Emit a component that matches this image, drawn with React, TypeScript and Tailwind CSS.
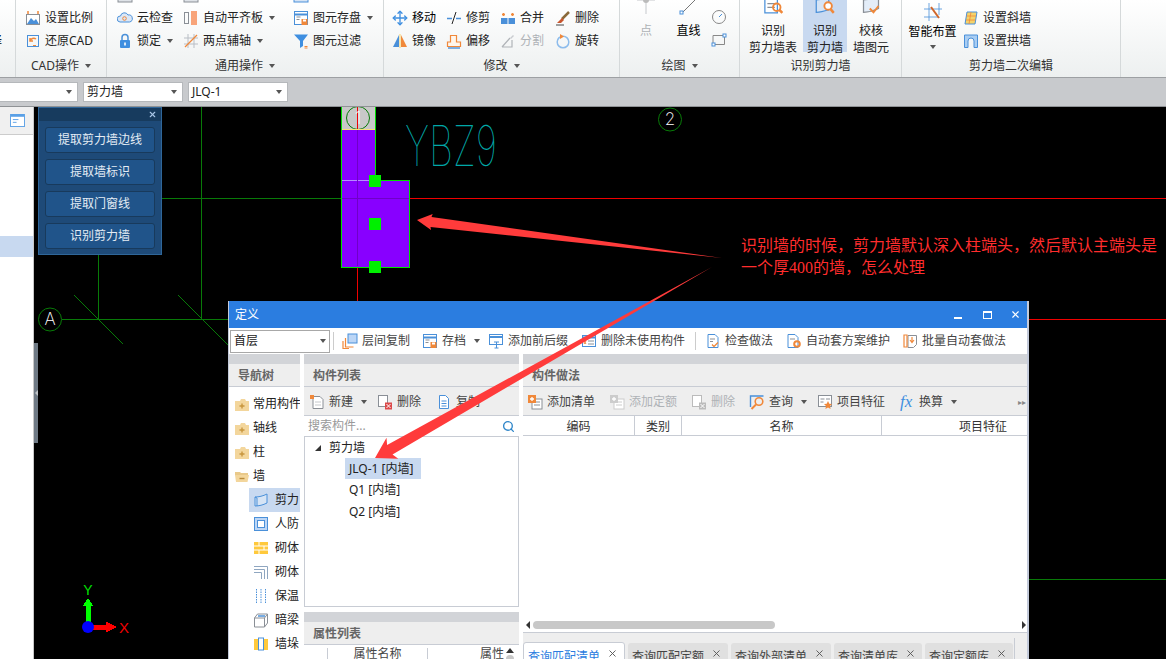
import type { ReactNode } from "react";
import { Move, Search, X } from "lucide-react";

const B = "#4a90d9";
const O = "#f0883a";
const G = "#8a8f96";

function Ico({ children, className = "w-4 h-4" }: { children: ReactNode; className?: string }) {
  return (
    <svg viewBox="0 0 16 16" fill="none" className={`shrink-0 ${className}`}>
      {children}
    </svg>
  );
}

function Caret({ className = "" }: { className?: string }) {
  return <span className={`inline-block w-0 h-0 border-x-[3.5px] border-x-transparent border-t-[4px] border-t-[#555] ${className}`} />;
}

const icons = {
  scale: <><rect x="1.500" y="4.500" width="13" height="10" stroke={G} fill="#fff" /><path d="M2 14l4-6 3 3 2-2 3 5z" fill={B} /><path d="M3 1v3M13 1v3" stroke={O} strokeWidth="1.500" /></>,
  restore: <><rect x="2.500" y="2.500" width="11" height="11" stroke={B} /><path d="M11 6a4 4 0 0 0-6 2M5 5v3h3" stroke={O} strokeWidth="1.500" /><path d="M8 12.500h3" stroke={O} /></>,
  cloud: <><path d="M3 12a3 3 0 0 1 .5-6A4 4 0 0 1 11 5a3.500 3.500 0 0 1 1.500 7z" fill="#dbe7f6" stroke={B} /><circle cx="7.500" cy="8.500" r="1.800" stroke={O} /></>,
  lock: <><path d="M5 7V4.500a3 3 0 0 1 6 0V7" stroke={B} strokeWidth="1.500" /><rect x="3" y="7" width="10" height="8" rx="1" fill="#3f8fe0" /><rect x="7.200" y="9.500" width="1.600" height="3" fill="#fff" /></>,
  align: <><rect x="1.500" y="2.500" width="4" height="11" stroke={G} /><rect x="8" y="1" width="6" height="14" fill="#f8a47a" /></>,
  twoPoint: <><path d="M1 5h14M1 11h14M5 1v14M11 1v14" stroke="#b9bec5" /><path d="M2 14L14 2" stroke={O} strokeWidth="1.300" /></>,
  saveWin: <><rect x="1.500" y="1.500" width="13" height="13" fill="#fff" stroke={B} /><path d="M2 4.500h12" stroke={B} strokeWidth="2" /><path d="M3.500 7h4M3.500 9.500h3" stroke={G} /><rect x="8.500" y="9" width="6" height="6" fill={O} /><rect x="10" y="9.500" width="3" height="2" fill="#fff" /></>,
  filter: <><path d="M1 1.500h14L10 8v5L7 15V8z" fill="#3f8fe0" /><path d="M11.500 13.500h3M11.500 15h3" stroke={O} /></>,
  trim: <><path d="M1 8.500h5M10 8.500h5" stroke={B} strokeWidth="1.300" /><path d="M6 14L10 2" stroke="#222" /></>,
  merge: <><rect x="1" y="8" width="6.500" height="6" fill={B} /><rect x="8.500" y="8" width="6.500" height="6" fill={B} /><path d="M2 4.500h3M3.500 3v3M11 4.500h3M12.500 3v3" stroke={O} strokeWidth="1.500" /></>,
  erase: <><path d="M14 2L7 9" stroke="#8a6a3a" strokeWidth="2.500" /><path d="M7 8l2 2-3 3H2z" fill="#c8562e" /><path d="M1 15h8" stroke="#444" /></>,
  mirror: <><path d="M7 2v12H1z" fill={B} /><path d="M9 2v12h6z" fill={O} /><path d="M8 1v14" stroke="#f5d36a" /></>,
  offset: <><path d="M1.500 13.500V9h3V2.500h6V9h4v4.500z" stroke={O} fill="#fff6ec" strokeWidth="1.200" /><path d="M2 15h12" stroke={B} strokeWidth="1.400" /></>,
  split: <><path d="M2 14h10V7M2 14l8-9" stroke="#b0b4b8" strokeWidth="1.200" /><path d="M10 5l3-3 1 1-3 3z" fill="#c9ccd0" /></>,
  rotate: <><circle cx="8" cy="9" r="5.800" stroke="#8dbcec" strokeWidth="1.500" /><path d="M5 1l4 2.500L5 6z" fill={O} /></>,
  wall: <><path d="M2 5c4 0 8-1 12-3v9c-4 2-8 3-12 3z" fill="#d6e4f5" stroke={B} /><path d="M2 5l2 1v8" stroke={B} /></>,
  wallCheck: <><path d="M2 3c4 0 8-1 12-2v9c-4 2-8 3-12 3z" fill="#e4edf8" stroke={G} /><path d="M7 10l3 3 4-5" stroke={O} strokeWidth="1.500" /></>,
  wallFind: <><path d="M1 3c3 0 7-1 10-2v10c-3 1-7 2-10 2z" fill="#d6e4f5" stroke={B} /><circle cx="10.500" cy="8" r="3" fill="#fff" stroke={O} strokeWidth="1.500" /><path d="M12.500 10.500l2.500 3" stroke={O} strokeWidth="2" /></>,
  wallTable: <><rect x="1.500" y="2.500" width="10" height="11" stroke={B} fill="#fff" /><path d="M3.500 6h6M3.500 9h6" stroke={G} /><circle cx="11" cy="9" r="3" stroke={O} strokeWidth="1.500" /><path d="M13 11l2.500 2.500" stroke={O} strokeWidth="2" /></>,
  slant: <><path d="M4 2h10l-2 12H2z" fill="#f5d36a" stroke={B} /><path d="M3.500 6h9.500M3 10h9.500M8 2L6 14" stroke={O} strokeWidth=".8" /></>,
  arch: <><path d="M1.500 14.500V2h13v12.500h-3.500V8a3 3 0 0 0-6 0v6.500z" fill="#a9cdf2" stroke={B} /></>,
  copyFloors: <><rect x="6" y="1" width="9" height="9" fill="#bcd6f6" stroke={B} /><path d="M3.500 5v9h8M1 8v7.500h6" stroke={O} strokeWidth="1.200" /></>,
  addFix: <><rect x="1.500" y="1.500" width="13" height="10" fill="#fff" stroke={B} /><path d="M2 4h12" stroke={B} strokeWidth="2" /><path d="M6 9h5M8.500 9v6M6.500 15h4" stroke={B} /></>,
  removeUnused: <><rect x="1.500" y="2.500" width="13" height="11" fill="#fff" stroke={B} /><path d="M2 4.500h12" stroke={B} strokeWidth="2" /><path d="M7 8h6M7 11h6" stroke={G} /><path d="M3 8l2 3M5 8l-2 3" stroke={O} /></>,
  doc: <><path d="M3 1.500h7l3 3v10H3z" fill="#fff" stroke={B} /><path d="M5 6h5M5 8.500h3" stroke={G} /><path d="M7 11.500l2 2 4-4" stroke={O} strokeWidth="1.300" /></>,
  docGear: <><path d="M2 1.500h7l3 3v10H2z" fill="#fff" stroke={B} /><path d="M4 6h5" stroke={G} /><circle cx="11" cy="11" r="2.800" stroke={O} strokeWidth="2" /></>,
  batch: <><path d="M6 2.500h8.500v9l-3 3H6z" fill="#fff" stroke={G} /><path d="M2 2v12h3V2z" stroke={O} strokeWidth="1.200" /><path d="M10 4v5M8 7l2 2.500L12 7" stroke={O} strokeWidth="1.200" /></>,
  newDoc: <><path d="M4 2.500h7l3 3v9H4z" fill="#fff" stroke={G} /><rect x="1" y="1" width="4" height="4" fill={O} /><path d="M6 8h6M6 11h6" stroke="#c5c8cc" /></>,
  del: <><rect x="1.500" y="1.500" width="9" height="11" fill="#fff" stroke={G} /><rect x="8" y="8.500" width="7" height="7" fill="#dc4a4a" /><path d="M9.500 10l4 4M13.500 10l-4 4" stroke="#fff" /></>,
  delOff: <><rect x="1.500" y="1.500" width="9" height="11" fill="#fff" stroke="#bbb" /><rect x="8" y="8.500" width="7" height="7" fill="#bbb" /><path d="M9.500 10l4 4M13.500 10l-4 4" stroke="#fff" /></>,
  copy: <><path d="M3.500 1.500h6l3 3v10h-9z" fill="#fff" stroke={B} /><path d="M5.500 7h5M5.500 9.500h5M5.500 12h5" stroke={B} /></>,
  addList: <><rect x="5" y="5" width="10" height="10" fill="#fff" stroke={G} /><path d="M7 8h6M7 11h6" stroke={G} /><rect x="1" y="1" width="8" height="8" fill={O} /><path d="M3 5h4M5 3v4" stroke="#fff" strokeWidth="1.300" /></>,
  addOff: <><rect x="5" y="5" width="10" height="10" fill="#fff" stroke="#ccc" /><path d="M7 8h6M7 11h6" stroke="#ccc" /><rect x="1" y="1" width="8" height="8" fill="#ccc" /><path d="M3 5h4M5 3v4" stroke="#fff" strokeWidth="1.300" /></>,
  query: <><path d="M1.500 13V2h13" stroke={B} strokeWidth="1.400" /><circle cx="10" cy="7.500" r="3.800" stroke={O} strokeWidth="1.600" /><path d="M7 10.500L2.500 15" stroke={O} strokeWidth="2" /></>,
  feature: <><rect x="1.500" y="1.500" width="13" height="11" fill="#fff" stroke={G} /><path d="M3.500 5h4M3.500 8h3M9 5h4" stroke={G} /><path d="M11 7l1.300 2.700 2.700.3-2 2 .6 3-2.600-1.500L8.400 15l.6-3-2-2 2.700-.3z" fill={O} /></>,
  folderPlus: <><path d="M1 5h5l1-2h4l1 2h3v10H1z" fill="#f3d69c" /><path d="M5.500 10h5M8 7.500v5" stroke="#c8963e" strokeWidth="1.400" /></>,
  folderOpen: <><path d="M1 4h5l1 1h7v2H1z" fill="#e9c98a" /><path d="M1 7h14l-1.500 7H2z" fill="#f3d69c" /><path d="M5.500 10.500h5" stroke="#b88a3a" strokeWidth="1.400" /></>,
  defence: <><rect x="1.500" y="1.500" width="13" height="13" fill="#bcd6f6" stroke={B} /><rect x="4.500" y="4.500" width="7" height="7" fill="#fff" stroke={B} /></>,
  brick: <><rect x="1" y="2" width="14" height="12" fill="#ffc93c" /><path d="M1 6h14M1 10h14M6 2v4M11 6v4M6 10v4" stroke="#fff" /></>,
  brickLine: <><path d="M1 2.500h13.500V15M1 5.500h10.500V15M1 8.500h7.500V15" stroke="#8fa6c0" /></>,
  insulate: <><path d="M3.500 1v14M8 1v14M12.500 1v14" stroke={B} strokeDasharray="1.500 1" /></>,
  beam: <><path d="M1.500 6l3-4h10v9l-3 4h-10z" fill="#fff" stroke={G} /><path d="M1.500 6h10v9M11.500 6l3-4" stroke={G} /><path d="M5 4h7" stroke={B} strokeWidth="1.500" /></>,
  pier: <><rect x="1" y="3" width="14" height="11" fill="#ffc93c" /><rect x="5.500" y="2" width="5" height="12" fill="#fff" stroke={B} /></>,
  stub: <><rect x="1" y="0" width="14" height="15" fill="#dfe3e8" stroke={G} /></>,
  stubBlue: <><rect x="1" y="0" width="14" height="15" fill="#d6e4f5" stroke={B} /></>,
};

function Tool({ icon, label, caret, off, className = "" }: { icon: ReactNode; label: string; caret?: boolean; off?: boolean; className?: string }) {
  return (
    <div className={`flex items-center h-[23px] shrink-0 ${className}`}>
      <Ico>{icon}</Ico>
      <span className={`ml-1 whitespace-nowrap ${off ? "text-[#aeb2b6]" : "text-[#222]"}`}>{label}</span>
      {caret && <Caret className="ml-[6px]" />}
    </div>
  );
}

function Stub({ icon }: { icon: ReactNode }) {
  return (
    <div className="h-[23px] flex items-center shrink-0">
      <Ico>{icon}</Ico>
    </div>
  );
}

function Group({ label, caret, className, children }: { label: string; caret?: boolean; className: string; children: ReactNode }) {
  return (
    <div className={`h-full shrink-0 flex flex-col border-r border-[#d5d9da] ${className}`}>
      <div className="h-[52px] flex">{children}</div>
      <div className="h-[25px] flex items-center justify-center text-[#333] pt-[2px]">
        {label}
        {caret && <Caret className="ml-[6px]" />}
      </div>
    </div>
  );
}

function Column({ className = "", children }: { className?: string; children: ReactNode }) {
  return <div className={`flex flex-col justify-end shrink-0 h-[52px] ${className}`}>{children}</div>;
}

function BigTool({ lines, icon, active, className = "" }: { lines: string[]; icon: ReactNode; active?: boolean; className?: string }) {
  return (
    <div className={`flex flex-col items-center shrink-0 h-[52px] leading-[17px] text-[#222] ${active ? "bg-[#c8d9f0]" : ""} ${className}`}>
      <Ico className="w-5 h-5 -mt-[4px] mb-[6px]">{icon}</Ico>
      {lines.map((l) => (
        <span key={l} className="whitespace-nowrap">{l}</span>
      ))}
    </div>
  );
}

function Ribbon() {
  return (
    <div className="h-[77px] flex bg-gradient-to-b from-white to-[#edf0f0] text-[12px] border-b border-[#9da0a3] box-content overflow-hidden">
      <Group label="" className="w-[16px]">
        <Column className="w-full overflow-hidden">
          <div className="h-[23px] -ml-[10px] flex items-center">择</div>
        </Column>
      </Group>
      <Group label="CAD操作" caret className="w-[91px]">
        <Column className="pl-[9px]">
          <Tool icon={icons.scale} label="设置比例" />
          <Tool icon={icons.restore} label="还原CAD" />
        </Column>
      </Group>
      <Group label="通用操作" caret className="w-[277px]">
        <Column className="w-[76px] pl-[10px]">
          <Stub icon={icons.stub} />
          <Tool icon={icons.cloud} label="云检查" />
          <Tool icon={icons.lock} label="锁定" caret />
        </Column>
        <Column className="w-[110px]">
          <Stub icon={icons.stub} />
          <Tool icon={icons.align} label="自动平齐板" caret />
          <Tool icon={icons.twoPoint} label="两点辅轴" caret />
        </Column>
        <Column>
          <Stub icon={icons.stubBlue} />
          <Tool icon={icons.saveWin} label="图元存盘" caret />
          <Tool icon={icons.filter} label="图元过滤" />
        </Column>
      </Group>
      <Group label="修改" caret className="w-[236px]">
        <div className="grid grid-cols-[54px_54px_55px_55px] pl-[8px] self-end">
          <div className="flex items-center h-[23px]">
            <Move className="w-4 h-4 text-[#3f8fe0]" />
            <span className="ml-1">移动</span>
          </div>
          <Tool icon={icons.trim} label="修剪" />
          <Tool icon={icons.merge} label="合并" />
          <Tool icon={icons.erase} label="删除" />
          <Tool icon={icons.mirror} label="镜像" />
          <Tool icon={icons.offset} label="偏移" />
          <Tool icon={icons.split} label="分割" off />
          <Tool icon={icons.rotate} label="旋转" />
        </div>
      </Group>
      <Group label="绘图" caret className="w-[120px]">
        <div className="w-[52px] flex flex-col items-center h-[52px] text-[#aeb2b6] leading-[17px]">
          <svg viewBox="0 0 20 20" className="w-5 h-5 -mt-[4px] mb-[6px] shrink-0">
            <path d="M1 4h18M10 0v18" stroke="#c5c8cc" />
            <circle cx="10" cy="4" r="3" fill="#bbb" />
          </svg>
          点
        </div>
        <div className="w-[33px] flex flex-col items-center h-[52px] leading-[17px]">
          <svg viewBox="0 0 20 20" className="w-5 h-5 -mt-[4px] mb-[6px] shrink-0">
            <path d="M3 17L19 1" stroke="#777" />
            <rect x="1" y="15" width="3" height="3" stroke={B} fill="#fff" />
          </svg>
          直线
        </div>
        <Column className="pl-[6px]">
          <Ico><circle cx="8" cy="8" r="6.500" stroke="#888" /><path d="M8 8l3-3" stroke={B} /></Ico>
          <div className="h-[7px]" />
          <Ico className="w-4 h-4 mb-[4px]"><path d="M2 3.500h11.500v9H2z" stroke="#888" /><rect x="12" y="2" width="3" height="3" stroke={B} fill="#fff" /><rect x="1" y="11" width="3" height="3" stroke={B} fill="#fff" /></Ico>
        </Column>
      </Group>
      <Group label="识别剪力墙" className="w-[162px]">
        <BigTool lines={["识别", "剪力墙表"]} icon={icons.wallTable} className="w-[63px] pl-[3px]" />
        <BigTool lines={["识别", "剪力墙"]} icon={icons.wallFind} active className="w-[44px]" />
        <BigTool lines={["校核", "墙图元"]} icon={icons.wallCheck} className="w-[48px]" />
      </Group>
      <Group label="剪力墙二次编辑" className="w-[219px]">
        <div className="w-[61px] flex flex-col items-center justify-end h-[52px]">
          <svg viewBox="0 0 24 20" className="w-6 h-5 shrink-0">
            <path d="M3 6h18M3 14h14M8 0v18M18 0v12" stroke={B} strokeWidth=".8" />
            <path d="M10 4l8 11" stroke="#d0662a" strokeWidth="2" />
          </svg>
          <span className="leading-[18px]">智能布置</span>
          <Caret className="mb-[3px] mt-[4px]" />
        </div>
        <Column>
          <Tool icon={icons.slant} label="设置斜墙" />
          <Tool icon={icons.arch} label="设置拱墙" />
        </Column>
      </Group>
    </div>
  );
}

function Select({ value, className }: { value: string; className: string }) {
  return (
    <div className={`h-[20px] bg-white border border-[#b5b8bb] flex items-center justify-between px-[3px] text-[12px] text-[#222] ${className}`}>
      <span>{value}</span>
      <Caret className="mr-[2px]" />
    </div>
  );
}

function CadDrawing() {
  return (
    <svg viewBox="38 107 1128 552" className="absolute inset-0 w-[1128px] h-[552px]" shapeRendering="crispEdges">
      <rect x="341" y="107" width="35" height="22" fill="#c8c8c8" />
      <path d="M357.500 107V129" stroke="#f00000" />
      <g stroke="#087a08" fill="none">
        <path d="M201.500 107V320M98.500 255V320M162 198.500H341M62 319.500H228M1029 579.500H1166" />
        <path d="M74 295L123 344M178 295L228 345" shapeRendering="auto" />
        <g shapeRendering="auto">
          <circle cx="358" cy="118" r="11.500" />
          <circle cx="670" cy="119.500" r="11.500" />
          <circle cx="50" cy="319.500" r="11.500" />
        </g>
      </g>
      <path d="M410 198.500H1166M357.500 267V301M1029 319.500H1166" stroke="#f00000" />
      <path d="M341.500 129.500H375.500V180.500H409.500V267.500H341.500Z" fill="#8800ff" stroke="#00e000" />
      <path d="M341.500 107V129M375.500 107V129" stroke="#00e000" />
      <path d="M342 129.500H375" stroke="#f5e27a" />
      <path d="M342 180.500H375" stroke="#b58cff" />
      <path d="M342 198.500H409M357.500 130V266" stroke="#7000c8" />
      <rect x="369" y="175" width="12" height="12" fill="#00f000" />
      <rect x="369" y="218" width="12" height="12" fill="#00f000" />
      <rect x="369" y="261" width="12" height="12" fill="#00f000" />
      <g shapeRendering="auto" fontFamily="Inter, sans-serif" fontWeight="200" textAnchor="middle" fill="#fff" fontSize="17">
        <text x="358" y="124">1</text>
        <text x="670" y="125">2</text>
        <text x="50" y="325">A</text>
      </g>
      <text x="405" y="166" fontSize="56" fontFamily="Inter, sans-serif" fontWeight="100" fill="#00a8a8" textLength="92" lengthAdjust="spacingAndGlyphs" shapeRendering="auto">YBZ9</text>

      <path d="M85.500 622V606H82.500L88 598L93.500 606H90.500V622Z" fill="#00ff00" />
      <path d="M92 624.500H106V621.500L117 627L106 632.500V629.500H92Z" fill="#ff0000" />
      <circle cx="88" cy="627" r="6" fill="#0000ff" shapeRendering="auto" />
      <text x="88" y="595" fontSize="14" fill="#00e000" textAnchor="middle" fontFamily="'Liberation Sans', sans-serif">Y</text>
      <text x="124" y="633" fontSize="15" fill="#f00000" textAnchor="middle" fontFamily="'Liberation Sans', sans-serif">X</text>
    </svg>
  );
}

function PickPanel() {
  const items = ["提取剪力墙边线", "提取墙标识", "提取门窗线", "识别剪力墙"];
  return (
    <div className="absolute left-0 top-0 w-[124px] h-[148px] bg-[#1e4a78] border border-[#2f6699] text-[12px] text-[#e4ecf4]">
      <div className="h-[13px] bg-[#173b5e] flex items-center justify-end pr-[4px]">
        <X className="w-[9px] h-[9px] text-[#a9c6e6]" strokeWidth={3} />
      </div>
      <div className="flex flex-col gap-[6px] px-[6px] pt-[6px]">
        {items.map((t) => (
          <div key={t} className="h-[26px] rounded-[3px] bg-[#20548a] border border-[#183a5c] flex items-center justify-center">
            {t}
          </div>
        ))}
      </div>
    </div>
  );
}

function WinTool({ icon, label, caret, className = "" }: { icon: ReactNode; label: string; caret?: boolean; className?: string }) {
  return (
    <div className={`h-[24px] flex items-center shrink-0 text-[#444] ${className}`}>
      <Ico>{icon}</Ico>
      <span className="ml-[4px] whitespace-nowrap">{label}</span>
      {caret && <Caret className="ml-[8px]" />}
    </div>
  );
}

function PanelHead({ title }: { title: string }) {
  return (
    <>
      <div className="h-[10px] bg-[#d2d4d8] shrink-0" />
      <div className="h-[23px] bg-[#eeeeee] border-b border-[#c8ccd4] flex items-center pl-[9px] pt-[1px] font-bold text-[#666] shrink-0">{title}</div>
    </>
  );
}

function NavRow({ icon, label, sub, active }: { icon: ReactNode; label: string; sub?: boolean; active?: boolean }) {
  return (
    <div className={`h-[24px] flex items-center whitespace-nowrap overflow-hidden ${sub ? "ml-[20px] pl-[4px]" : "pl-[5px]"} ${active ? "bg-[#c8d9f0]" : ""}`}>
      <Ico>{icon}</Ico>
      <span className={sub ? "ml-[6px]" : "ml-[3px]"}>{label}</span>
    </div>
  );
}

function DefineWindow() {
  const tabs = [
    { t: "查询匹配定额", w: "w-[100px]" },
    { t: "查询外部清单", w: "w-[100px]" },
    { t: "查询清单库", w: "w-[88px]" },
    { t: "查询定额库", w: "w-[88px]" },
  ];
  return (
    <div className="absolute left-[228px] top-[301px] w-[801px] h-[358px] bg-white flex flex-col overflow-hidden text-[12px] text-[#222] border-l border-r-2 border-[#c3cada]">
      <div className="h-[27px] bg-[#2b7de0] -ml-[1px] -mr-[2px] flex items-center justify-between text-white shrink-0 pl-[7px]">
        <span>定义</span>
        <div className="flex items-center">
          <span className="w-[8px] h-[2px] bg-white mt-[6px] mr-[21px]" />
          <span className="w-[9px] h-[8px] border border-white border-t-2 mr-[18px]" />
          <X className="w-[11px] h-[11px] mr-[8px]" strokeWidth={2.5} />
        </div>
      </div>
      <div className="h-[26px] flex items-center shrink-0 pl-[1px]">
        <div className="w-[100px] h-[23px] border border-[#a8a8a8] flex items-center justify-between px-[3px] text-[#222] shrink-0">
          <span>首层</span>
          <Caret />
        </div>
        <span className="w-px h-[18px] bg-[#ccc] ml-[3px] mr-[8px]" />
        <WinTool icon={icons.copyFloors} label="层间复制" className="w-[80px]" />
        <WinTool icon={icons.saveWin} label="存档" caret className="w-[66px]" />
        <WinTool icon={icons.addFix} label="添加前后缀" className="w-[93px]" />
        <WinTool icon={icons.removeUnused} label="删除未使用构件" className="w-[114px]" />
        <span className="w-px h-[18px] bg-[#ccc] mr-[9px]" />
        <WinTool icon={icons.doc} label="检查做法" className="w-[81px]" />
        <WinTool icon={icons.docGear} label="自动套方案维护" className="w-[116px]" />
        <WinTool icon={icons.batch} label="批量自动套做法" />
      </div>
      <div className="flex-1 flex gap-[4px] min-h-0">
        <div className="w-[71px] flex flex-col shrink-0 overflow-hidden">
          <PanelHead title="导航树" />
          <div className="pt-[5px] flex flex-col">
            <NavRow icon={icons.folderPlus} label="常用构件" />
            <NavRow icon={icons.folderPlus} label="轴线" />
            <NavRow icon={icons.folderPlus} label="柱" />
            <NavRow icon={icons.folderOpen} label="墙" />
            <NavRow icon={icons.wall} label="剪力" sub active />
            <NavRow icon={icons.defence} label="人防" sub />
            <NavRow icon={icons.brick} label="砌体" sub />
            <NavRow icon={icons.brickLine} label="砌体" sub />
            <NavRow icon={icons.insulate} label="保温" sub />
            <NavRow icon={icons.beam} label="暗梁" sub />
            <NavRow icon={icons.pier} label="墙垛" sub />
          </div>
        </div>

        <div className="w-[215px] flex flex-col shrink-0">
          <PanelHead title="构件列表" />
          <div className="h-[29px] bg-[#eeeeee] border-b border-[#c8ccd4] flex items-center pl-[5px] pt-[1px] shrink-0">
            <WinTool icon={icons.newDoc} label="新建" caret className="w-[68px]" />
            <WinTool icon={icons.del} label="删除" className="w-[59px]" />
            <WinTool icon={icons.copy} label="复制" />
          </div>
          <div className="h-[20px] flex items-center justify-between px-[4px] text-[#999] shrink-0">
            <span>搜索构件...</span>
            <Search className="w-[13px] h-[13px] text-[#2f86c9]" strokeWidth={2.5} />
          </div>
          <div className="h-[171px] border border-[#c8ccd4] shrink-0">
            <div className="h-[21px] flex items-center pl-[10px]">
              <span className="w-0 h-0 border-l-[6px] border-l-transparent border-b-[6px] border-b-[#333]" />
              <span className="ml-[8px]">剪力墙</span>
            </div>
            <div className="ml-[40px] w-[76px] h-[21px] bg-[#c8d9f0] flex items-center pl-[4px] whitespace-nowrap">JLQ-1 [内墙]</div>
            <div className="ml-[44px] h-[22px] flex items-center">Q1 [内墙]</div>
            <div className="ml-[44px] h-[21px] flex items-center">Q2 [内墙]</div>
          </div>
          <div className="h-[5px] shrink-0" />
          <PanelHead title="属性列表" />
          <div className="flex-1 flex items-center text-[#444] relative pt-[3px] overflow-hidden">
            <span className="w-[24px] h-full border-r border-[#c8ccd4]" />
            <span className="w-[100px] h-full border-r border-[#c8ccd4] flex items-center justify-center">属性名称</span>
            <span className="ml-[52px]">属性</span>
            <span className="absolute right-[5px] top-[3px] w-0 h-0 border-x-[4px] border-x-transparent border-b-[5px] border-b-[#333]" />
            <span className="absolute right-[5px] top-[10px] w-[8px] h-[8px] rounded-full bg-[#c8c8c8]" />
          </div>
        </div>

        <div className="flex-1 flex flex-col min-w-0">
          <PanelHead title="构件做法" />
          <div className="h-[29px] bg-[#eeeeee] border-b border-[#c8ccd4] flex items-center pl-[4px] pt-[1px] shrink-0 relative">
            <WinTool icon={icons.addList} label="添加清单" className="w-[82px]" />
            <WinTool icon={icons.addOff} label="添加定额" className="w-[82px] !text-[#aeb2b6]" />
            <WinTool icon={icons.delOff} label="删除" className="w-[58px] !text-[#aeb2b6]" />
            <WinTool icon={icons.query} label="查询" caret className="w-[68px]" />
            <WinTool icon={icons.feature} label="项目特征" className="w-[83px]" />
            <div className="flex items-center text-[#444]">
              <span className="w-[14px] italic font-['Liberation_Serif',serif] text-[17px] text-[#3f8fe0]">fx</span>
              <span className="ml-[5px]">换算</span>
              <Caret className="ml-[8px]" />
            </div>
            <span className="absolute right-[1px] text-[#888] text-[8px]">▸▸</span>
          </div>
          <div className="h-[20px] flex text-[#333] border-b border-[#c8ccd4] shrink-0 overflow-hidden">
            <div className="w-[112px] shrink-0 border-r border-[#c8ccd4] flex items-center justify-center pt-[2px]">编码</div>
            <div className="w-[47px] shrink-0 border-r border-[#c8ccd4] flex items-center justify-center pt-[2px]">类别</div>
            <div className="w-[200px] shrink-0 border-r border-[#c8ccd4] flex items-center justify-center pt-[2px]">名称</div>
            <div className="w-[202px] shrink-0 flex items-center justify-center pt-[2px]">项目特征</div>
          </div>
          <div className="flex-1" />
          <div className="h-[12px] border-b border-[#c8ccd4] flex items-center shrink-0 box-content pb-[1px] relative">
            <span className="ml-[3px] w-0 h-0 border-y-[4px] border-y-transparent border-r-[4px] border-r-[#333]" />
            <span className="ml-[3px] w-[242px] h-[8px] rounded-full bg-[#c8c8c8]" />
            <span className="absolute right-[1px] w-0 h-0 border-y-[4px] border-y-transparent border-l-[4px] border-l-[#333]" />
          </div>
          <div className="h-[26px] bg-[#eeeeee] flex items-start pt-[9px] gap-[3px] shrink-0 overflow-hidden relative">
            <div className="w-[102px] h-[24px] bg-white border border-[#c8ccd4] rounded-t-[3px] flex items-start justify-between pl-[4px] pr-[6px] text-[#2b7de0] whitespace-nowrap">
              <span className="mt-[5px]">查询匹配清单</span>
              <X className="w-[11px] h-[11px] text-[#555] mt-[5px]" />
            </div>
            {tabs.map((tab) => (
              <div key={tab.t} className={`${tab.w} h-[24px] mt-[1px] bg-[#e0e0e0] rounded-t-[3px] flex items-start justify-between pl-[4px] pr-[6px] text-[#444] whitespace-nowrap`}>
                <span className="mt-[5px]">{tab.t}</span>
                <X className="w-[11px] h-[11px] text-[#555] mt-[5px]" />
              </div>
            ))}
            <span className="absolute left-[491px] top-[5px] w-px h-[21px] bg-[#c8ccd4]" />
          </div>
        </div>
      </div>
    </div>
  );
}

function Annotation() {
  return (
    <>
      <svg viewBox="0 0 1166 659" className="absolute inset-0 w-[1166px] h-[659px] pointer-events-none">
        <path d="M417 220L432.700 214L431.500 217L722 258L430.500 227L431 230Z" fill="#ff3b3b" />
        <path d="M375 458L386.500 437.700L387.100 444.900L712 267L392.500 454.500L398.300 458.700Z" fill="#ff3b3b" />
      </svg>
      <div className="absolute left-[741px] top-[235px] w-[420px] text-[16px] leading-[22px] text-[#ff2d2d] font-['Liberation_Serif','Noto_Sans_CJK_SC',serif]">
        识别墙的时候，剪力墙默认深入柱端头，然后默认主端头是一个厚400的墙，怎么处理
      </div>
    </>
  );
}

export default function App() {
  return (
    <div className="relative w-[1166px] h-[659px] overflow-hidden bg-black flex flex-col font-['Noto_Sans','Noto_Sans_CJK_SC',sans-serif]">
      <Ribbon />
      <div className="h-[29px] bg-[#c8cacd] border-b border-[#8f9295] flex items-center gap-[5px] shrink-0">
        <Select value="" className="w-[78px] border-l-0" />
        <Select value="剪力墙" className="w-[100px]" />
        <Select value="JLQ-1" className="w-[100px]" />
      </div>
      <div className="flex-1 flex min-h-0">
        <div className="w-[34px] bg-white border-r border-[#c8c8c8] flex flex-col shrink-0">
          <div className="h-[28px] bg-[#f0f0f0] border-b border-[#ccc] flex items-center justify-end pr-[8px] shrink-0">
            <svg viewBox="0 0 16 14" className="w-[15px] h-[13px]">
              <rect width="16" height="14" fill="#5aa0e6" />
              <rect x="1" y="3" width="14" height="10" fill="#fff" />
              <path d="M3 6h6M3 9h4" stroke="#5aa0e6" />
            </svg>
          </div>
          <div className="mt-[101px] h-[21px] bg-[#c8d9f0] shrink-0" />
        </div>
        <div className="w-[4px] relative shrink-0">
          <div className="mt-[236px] h-[100px] bg-[#6f7a85] flex items-center justify-center">
            <span className="w-0 h-0 border-y-[3px] border-y-transparent border-r-[3px] border-r-[#c0c4c8]" />
          </div>
        </div>
        <div className="flex-1 relative">
          <CadDrawing />
          <PickPanel />
        </div>
      </div>
      <DefineWindow />
      <Annotation />
    </div>
  );
}
